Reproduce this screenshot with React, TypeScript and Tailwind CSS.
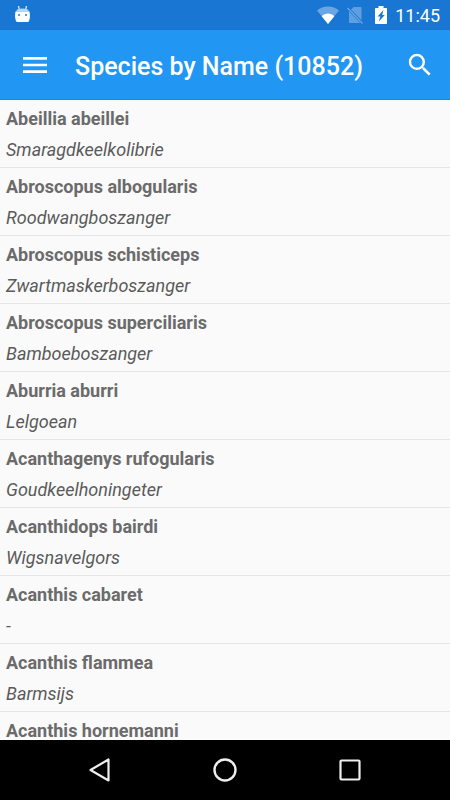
import { MdMenu, MdSearch } from "react-icons/md";

interface Species {
  name: string;
  dutch: string;
}

const species: Species[] = [
  { name: "Abeillia abeillei", dutch: "Smaragdkeelkolibrie" },
  { name: "Abroscopus albogularis", dutch: "Roodwangboszanger" },
  { name: "Abroscopus schisticeps", dutch: "Zwartmaskerboszanger" },
  { name: "Abroscopus superciliaris", dutch: "Bamboeboszanger" },
  { name: "Aburria aburri", dutch: "Lelgoean" },
  { name: "Acanthagenys rufogularis", dutch: "Goudkeelhoningeter" },
  { name: "Acanthidops bairdi", dutch: "Wigsnavelgors" },
  { name: "Acanthis cabaret", dutch: "-" },
  { name: "Acanthis flammea", dutch: "Barmsijs" },
  { name: "Acanthis hornemanni", dutch: "" },
];

const StatusBar = () => (
  <div className="flex h-[30px] shrink-0 items-center bg-[#1976d2] pl-3.5 pr-2.5 text-white">
    <svg className="h-[18px] w-[17px]" viewBox="0 0 17 18" aria-hidden="true">
      <path d="M4.500 0 5.300 3.500M12.500 0 11.700 3.500" stroke="#dcebfa" strokeWidth="1.200" strokeLinecap="round" />
      <path d="M2.200 5.600C2.400 3.400 4.600 2.600 8.500 2.600s6.100.8 6.300 3z" fill="#b9d6f4" />
      <path d="M1.500 5.500h14c.6 3 .6 6.500-.3 9-.4 1.100-1 1.500-2 1.500H3.800c-1 0-1.600-.4-2-1.500-.9-2.500-.9-6-.3-9z" fill="#fff" />
      <rect x="4" y="8" width="2" height="2" fill="#5b9be0" />
      <rect x="11" y="8" width="2" height="2" fill="#5b9be0" />
    </svg>
    <div className="ml-auto flex items-center">
      <svg className="h-[18px] w-[22px]" viewBox="0 0 22 18" aria-hidden="true">
        <path d="M0 4.500C6 -1 16 -1 22 4.500L11 18z" fill="#6aa6e3" />
        <path d="M4.700 10.200C8 6.700 14 6.700 17.300 10.200L11 18z" fill="#fff" />
      </svg>
      <svg className="ml-2 h-[18px] w-4" viewBox="0 0 16 18" aria-hidden="true">
        <path d="M6.500 1h7c.6 0 1 .4 1 1v12.300L4 3.500zM2 5.200 13.200 17H3c-.6 0-1-.4-1-1z" fill="#5e9fe0" />
        <path d="M.5 2 15.500 17.500" stroke="#6aa6e3" strokeWidth="1.300" />
      </svg>
      <svg className="ml-3 h-[18px] w-3" viewBox="0 0 12 18" aria-hidden="true">
        <path d="M3.500 0h5v2H11c.6 0 1 .4 1 1v14c0 .6-.4 1-1 1H1c-.6 0-1-.4-1-1V3c0-.6.4-1 1-1h2.500z" fill="#fff" />
        <path d="M8.500 4 2.500 10.500h2.800L3.800 15.500 9.800 9H7.200z" fill="#1976d2" />
      </svg>
      <span className="ml-2 pt-px text-lg leading-none">11:45</span>
    </div>
  </div>
);

const AppBar = () => (
  <header className="flex h-[70px] shrink-0 items-center border-b border-[#1287ee] bg-[#2196f3] px-[15px] text-white">
    <button type="button" aria-label="Menu" className="px-1">
      <MdMenu className="size-8" />
    </button>
    <h1 className="ml-5 flex-1 whitespace-nowrap pt-1 text-[25px] font-medium leading-8">
      Species by Name (10852)
    </h1>
    <button type="button" aria-label="Search">
      <MdSearch className="size-[30px]" />
    </button>
  </header>
);

const NavBar = () => (
  <nav className="flex h-[60px] shrink-0 items-center justify-center gap-[101px] bg-black">
    <button type="button" aria-label="Back">
      <svg className="size-6" viewBox="0 0 24 24" fill="none" stroke="#eee" strokeWidth="2.200" strokeLinejoin="round">
        <path d="M20.500 1.500v21L2.500 12z" />
      </svg>
    </button>
    <button type="button" aria-label="Home">
      <svg className="size-6" viewBox="0 0 24 24" fill="none" stroke="#eee" strokeWidth="2.400">
        <circle cx="12" cy="12" r="10.500" />
      </svg>
    </button>
    <button type="button" aria-label="Recent apps">
      <svg className="size-6" viewBox="0 0 24 24" fill="none" stroke="#eee" strokeWidth="2.200">
        <rect x="2.500" y="2.500" width="19" height="19" rx="1" />
      </svg>
    </button>
  </nav>
);

const App = () => {
  return (
    <div className="flex h-screen flex-col overflow-hidden bg-[#fafafa] font-[Roboto,sans-serif]">
      <StatusBar />
      <AppBar />
      <main className="min-h-0 flex-1 overflow-hidden">
        <ul>
          {species.map((s) => (
            <li key={s.name} className="h-[68px] border-b border-[#e5e5e5] px-1.5 pt-[7px] text-lg">
              <p className="font-bold leading-6 text-[#6b6b6b]">{s.name}</p>
              <p className="mt-[7px] italic leading-6 text-[#5a5a5a]">{s.dutch}</p>
            </li>
          ))}
        </ul>
      </main>
      <NavBar />
    </div>
  );
};

export default App;
